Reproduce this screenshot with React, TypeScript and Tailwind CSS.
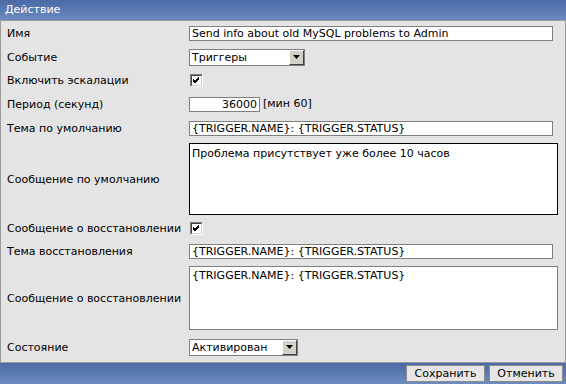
import React from 'react';

const font = "font-['DejaVu_Sans',Verdana,sans-serif]";

const Checkbox: React.FC = () => (
  <div className="w-[13px] h-[13px] bg-white border border-t-[#808080] border-l-[#808080] border-r-white border-b-white flex">
    <div className="flex-1 border border-t-[#404040] border-l-[#404040] border-r-[#d4d0c8] border-b-[#d4d0c8] flex items-center justify-center">
      <svg width="9" height="9" viewBox="0 0 9 9">
        <path d="M1 4 L3 6 L7 2 M1 5 L3 7 L7 3 M1 3 L3 5 L7 1" stroke="#000" strokeWidth="1" fill="none" />
      </svg>
    </div>
  </div>
);

const Select: React.FC<{ value: string; width: string }> = ({ value, width }) => (
  <div className={`${width} h-[17px] bg-white border border-[#7f7f7f] flex items-center`}>
    <span className="flex-1 pl-[2px] text-[11px] text-black leading-none">{value}</span>
    <div className="w-[15px] h-[15px] bg-[#d4d0c8] border border-t-white border-l-white border-r-[#404040] border-b-[#404040] flex items-center justify-center">
      <svg width="7" height="4" viewBox="0 0 7 4">
        <path d="M0 0 H7 L3.5 4 Z" fill="#000" />
      </svg>
    </div>
  </div>
);

const TextInput: React.FC<{ value: string; className?: string }> = ({ value, className }) => (
  <div className={`h-[15px] bg-white border border-[#7f7f7f] flex items-center pl-[2px] text-[11px] text-black leading-none ${className ?? 'w-[364px]'}`}>
    {value}
  </div>
);

const Row: React.FC<{ label: string; h: string; children: React.ReactNode }> = ({ label, h, children }) => (
  <div className={`flex items-center ${h}`}>
    <div className="w-[188px] shrink-0 pl-[6px] pt-[2px] text-[11px] text-black whitespace-nowrap">{label}</div>
    <div className="flex-1 flex items-center">{children}</div>
  </div>
);

const App: React.FC = () => {
  return (
    <div className={`w-[566px] h-[384px] flex flex-col bg-[#e4e4e4] ${font}`}>
      {/* Header */}
      <div className="h-[20px] bg-gradient-to-b from-[#4a69a6] to-[#6c8bbf] flex items-center pl-[5px] text-white text-[11px]">
        Действие
      </div>

      <div className="flex-1 border-t border-l border-r border-b border-[#9a9a9a] flex flex-col">
        <Row label="Имя" h="h-[24px]">
          <TextInput value="Send info about old MySQL problems to Admin" />
        </Row>
        <Row label="Событие" h="h-[24px]">
          <Select value="Триггеры" width="w-[116px]" />
        </Row>
        <Row label="Включить эскалации" h="h-[23px]">
          <div className="pl-[1px]"><Checkbox /></div>
        </Row>
        <Row label="Период (секунд)" h="h-[24px]">
          <TextInput value="36000" className="w-[71px] justify-end pr-[2px]" />
          <span className="ml-[3px] text-[11px] text-black">[мин 60]</span>
        </Row>
        <Row label="Тема по умолчанию" h="h-[24px]">
          <TextInput value="{TRIGGER.NAME}: {TRIGGER.STATUS}" />
        </Row>
        <Row label="Сообщение по умолчанию" h="h-[78px]">
          <div className="w-[369px] h-[72px] bg-white border border-black p-[2px] pt-[3px] text-[11px] text-black leading-[13px]">
            Проблема присутствует уже более 10 часов
          </div>
        </Row>
        <Row label="Сообщение о восстановлении" h="h-[21px]">
          <div className="pl-[1px]"><Checkbox /></div>
        </Row>
        <Row label="Тема восстановления" h="h-[24px]">
          <TextInput value="{TRIGGER.NAME}: {TRIGGER.STATUS}" />
        </Row>
        <Row label="Сообщение о восстановлении" h="h-[70px]">
          <div className="w-[369px] h-[64px] bg-white border border-[#7f7f7f] p-[2px] text-[11px] text-black leading-[13px]">
            {'{TRIGGER.NAME}: {TRIGGER.STATUS}'}
          </div>
        </Row>
        <Row label="Состояние" h="h-[28px]">
          <Select value="Активирован" width="w-[109px]" />
        </Row>
      </div>

      {/* Footer */}
      <div className="h-[21px] bg-gradient-to-b from-[#4a69a6] to-[#6c8bbf] flex items-center justify-end gap-[4px] pr-[3px]">
        <button className="w-[79px] h-[17px] bg-[#e6e6e6] border border-[#8a8a8a] text-[11px] text-black leading-none">
          Сохранить
        </button>
        <button className="w-[74px] h-[17px] bg-[#e6e6e6] border border-[#8a8a8a] text-[11px] text-black leading-none">
          Отменить
        </button>
      </div>
    </div>
  );
};

export default App;
